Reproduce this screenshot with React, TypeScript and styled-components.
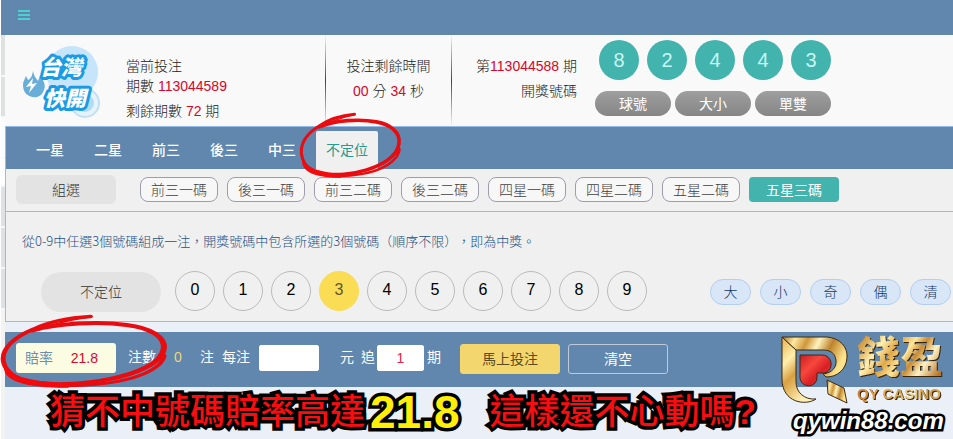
import React, { useState } from "react";
import styled, { createGlobalStyle, css } from "styled-components";

const GlobalStyle = createGlobalStyle`
  *, *::before, *::after { box-sizing: border-box; }
  body {
    margin: 0;
    background: #ebeff8;
    font-family: "Liberation Sans", "Noto Sans CJK TC", sans-serif;
    font-size: 14px;
    font-weight: 300;
    line-height: 20px;
    color: #222;
    text-spacing-trim: space-all;
  }
  button, input { font: inherit; margin: 0; }
  button { cursor: pointer; }
`;

const steel = "#6187ae";
const teal = "#43b3ae";

const Page = styled.div`
  position: relative;
  overflow: hidden;
  padding-left: 1px;
  background: linear-gradient(to right, #fff 1px, #ebeff8 1px);
`;

const TopBar = styled.header`
  height: 35px;
  padding: 0 17px 5px;
  display: flex;
  align-items: center;
  background: ${steel};
`;

const MenuButton = styled.button`
  width: 12px;
  height: 12px;
  padding: 0;
  border: 0;
  background: none;
  display: flex;
  svg { display: block; }
`;

const Columns = styled.div`
  display: grid;
  grid-template-columns: 4px minmax(0, 1fr);
`;

const Rail = styled.div`
  display: flex;
  flex-direction: column;
  background: #f3f3f3;
`;

const RailItem = styled.div<{ $h: number; $bg: string }>`
  height: ${(p) => p.$h}px;
  background: ${(p) => p.$bg};
  border-bottom: 2px solid #f6f7f9;
`;

const Main = styled.main`
  min-width: 0;
`;

const Summary = styled.section`
  height: 91px;
  display: flex;
  background: #f9f9f9;
`;

const Brand = styled.div`
  width: 121px;
  padding: 9px 0 0 16px;
  flex: none;
  svg { display: block; }
  text {
    font: italic 900 21px "Noto Sans CJK TC", sans-serif;
    paint-order: stroke;
    stroke-linejoin: round;
  }
`;

const Red = styled.span`
  color: #d8062c;
`;

const Round = styled.div`
  flex: none;
  width: 199px;
  padding-top: 21px;
  p { margin: 0; }
  p + p + p { margin-top: 5px; }
`;

const Countdown = styled.div`
  flex: none;
  width: 127px;
  padding-top: 21px;
  text-align: center;
  border: solid transparent;
  border-width: 0 1px;
  border-image: linear-gradient(to bottom, #f9f9f9 0%, #444 50%, #f9f9f9 100%) 1;
  p { margin: 0; }
  p + p { margin-top: 5px; }
`;

const Last = styled.div`
  flex: none;
  width: 125px;
  padding-top: 21px;
  text-align: right;
  p { margin: 0; }
  p + p { margin-top: 5px; }
`;

const Draw = styled.div`
  flex: none;
  padding: 5px 0 0 18px;
`;

const Balls = styled.div`
  display: flex;
  gap: 8px;
  padding-left: 4px;
`;

const Ball = styled.span`
  width: 40px;
  height: 40px;
  border-radius: 50%;
  background: ${teal};
  color: #c5f7f4;
  font-size: 20px;
  line-height: 40px;
  text-align: center;
`;

const Views = styled.div`
  display: flex;
  gap: 4px;
  margin-top: 11px;
`;

const ViewButton = styled.button`
  width: 76px;
  height: 25px;
  padding: 0;
  border: 0;
  border-radius: 13px;
  color: #fff;
  font-weight: 400;
  background: linear-gradient(#9e9e9e, #868686);
`;

const Panel = styled.section`
  border: 1px solid #94bbea;
  border-right: 0;
  background: #f0f0f0;
`;

const Tabs = styled.nav`
  height: 42px;
  display: flex;
  align-items: flex-end;
  gap: 10px;
  padding-left: 20px;
  background: ${steel};
`;

const Tab = styled.button<{ $on: boolean }>`
  height: 38px;
  padding: 0 10px;
  border: 0;
  border-radius: 2px 2px 0 0;
  background: ${(p) => (p.$on ? "#f0f0f0" : "transparent")};
  color: ${(p) => (p.$on ? "#259a8f" : "#fff")};
  font-weight: ${(p) => (p.$on ? 400 : 500)};
`;

const Plays = styled.div`
  height: 43px;
  display: flex;
  align-items: flex-start;
  gap: 9px;
  padding: 8px 0 0 10px;
  border-bottom: 1px solid #b4b5b9;
`;

const GroupLabel = styled.span`
  width: 100px;
  height: 29px;
  margin: -2px 15px 0 0;
  border-radius: 6px;
  background: #e3e3e3;
  color: #333;
  line-height: 30px;
  text-align: center;
`;

const PlayButton = styled.button<{ $on: boolean }>`
  width: 78px;
  height: 25px;
  padding: 0;
  border: 1px solid #9c9fab;
  border-radius: 8px;
  background: #f7f7f7;
  color: #404040;
  ${(p) =>
    p.$on &&
    css`
      width: 90px;
      border: 0;
      border-radius: 4px;
      background: ${teal};
      color: #fff;
      font-weight: 400;
    `}
`;

const Hint = styled.p`
  margin: 0;
  padding: 19px 16px 19px;
  font-family: "Noto Sans CJK TC", sans-serif;
  font-size: 13px;
  line-height: 20px;
  color: #1f4f82;
`;

const Picker = styled.div`
  height: 51px;
  display: flex;
  align-items: flex-start;
  padding: 1px 2px 0 35px;
`;

const PickLabel = styled.span`
  flex: none;
  width: 120px;
  height: 40px;
  margin: 1px 14px 0 0;
  border-radius: 20px;
  background: #e3e3e3;
  color: #333;
  line-height: 40px;
  text-align: center;
`;

const Digits = styled.div`
  display: flex;
  gap: 8px;
`;

const Digit = styled.button<{ $on: boolean }>`
  width: 40px;
  height: 40px;
  padding: 0 0 2px;
  border: 1px solid ${(p) => (p.$on ? "#fadc55" : "#bbb")};
  border-radius: 50%;
  background: ${(p) => (p.$on ? "#fadc55" : "transparent")};
  color: ${(p) => (p.$on ? "#5f5830" : "#000")};
  font-size: 16px;
`;

const Quick = styled.div`
  display: flex;
  gap: 9px;
  margin: 8px 0 0 auto;
`;

const QuickButton = styled.button`
  width: 41px;
  height: 26px;
  padding: 0;
  border: 1px solid #b2cff0;
  border-radius: 13px;
  background: #d9e6f8;
  color: #123663;
`;

const BetBar = styled.form`
  height: 55px;
  margin-top: 10px;
  padding: 11px 0 0 11px;
  display: flex;
  align-items: flex-start;
  background: ${steel};
  color: #fff;
  font-weight: 400;
  line-height: 28px;
`;

const Odds = styled.div`
  flex: none;
  width: 100px;
  height: 30px;
  margin-right: 12px;
  padding: 0 18px 0 9px;
  display: flex;
  justify-content: space-between;
  border-radius: 3px;
  background: #fcfce2;
  color: #6c8fb0;
  line-height: 30px;
`;

const Count = styled.output`
  width: 44px;
  text-align: center;
  color: #ecd672;
`;

const Amount = styled.label`
  display: flex;
  margin: 0 21px 0 8px;
  gap: 9px;
`;

const Chase = styled.label`
  display: flex;
  margin: 0 3px 0 7px;
  gap: 2px;
`;

const Field = styled.input<{ $w: number }>`
  width: ${(p) => p.$w}px;
  height: 26px;
  margin-top: 2px;
  padding: 0;
  border: 1px solid #fff;
  border-radius: 2px;
  background: #fff;
  color: #e2244c;
  text-align: center;
`;

const Action = styled.button<{ $solid?: boolean }>`
  width: 100px;
  height: 30px;
  margin: 1px 0 0 8px;
  padding: 0;
  border: 1px solid ${(p) => (p.$solid ? "#f4d66f" : "#bccad9")};
  border-radius: 3px;
  background: ${(p) => (p.$solid ? "#f4d66f" : "transparent")};
  color: ${(p) => (p.$solid ? "#5a4a1c" : "#fff")};
`;

const Actions = styled.div`
  display: flex;
  margin-left: 11px;
`;

const Slogan = styled.p`
  margin: 0;
  height: 52px;
  padding-left: 45px;
  display: flex;
  align-items: flex-start;
  white-space: pre;
  font: 500 35px/50px "Liberation Sans", "Noto Sans CJK TC", sans-serif;
  color: #f80d10;
  -webkit-text-stroke: 7px #000;
  paint-order: stroke fill;
`;

const Figure = styled.strong`
  margin: 0 30px 0 5px;
  font-size: 46px;
  color: #ffee0a;
`;

const Question = styled.b`
  font-weight: 700;
`;

const Sponsor = styled.aside`
  position: absolute;
  right: 5px;
  bottom: 3px;
  width: 167px;
`;

const SponsorRow = styled.div`
  display: flex;
  align-items: flex-end;
  gap: 8px;
  svg { flex: none; display: block; }
`;

const Gold = styled.span<{ $size: number; $line: number; $deep?: boolean }>`
  display: block;
  font: 900 ${(p) => p.$size}px/${(p) => p.$line}px "Liberation Sans", "Noto Sans CJK TC", sans-serif;
  white-space: nowrap;
  color: transparent;
  background: ${(p) =>
    p.$deep
      ? "linear-gradient(100deg, #c9782a 0%, #e8a24a 25%, #d8ad55 50%, #fbe08c 62%, #c8913c 80%, #e8b455 100%)"
      : "linear-gradient(125deg, #c98a2e 6%, #fff0b0 26%, #e0a848 40%, #ffe79a 52%, #c98c34 62%, #fff3c4 74%, #b9762a 92%)"};
  background-clip: text;
  -webkit-background-clip: text;
  filter: drop-shadow(1px 1px 0 #35240c);
`;

const Site = styled.a`
  display: block;
  padding-left: 12px;
  font: italic bold 24px/30px "Liberation Sans", sans-serif;
  text-decoration: none;
  color: #fff;
  -webkit-text-stroke: 5px #000;
  paint-order: stroke fill;
`;

const Ring = styled.svg<{ $x: number; $y: number; $w: number; $h: number }>`
  position: absolute;
  left: ${(p) => p.$x}px;
  top: ${(p) => p.$y}px;
  width: ${(p) => p.$w}px;
  height: ${(p) => p.$h}px;
  overflow: visible;
  pointer-events: none;
`;

type RingProps = { x: number; y: number; w: number; h: number };

function RedRing({ x, y, w, h }: RingProps) {
  return (
    <Ring $x={x} $y={y} $w={w} $h={h} viewBox="120 8 304 198" preserveAspectRatio="none" aria-hidden="true">
      <g fill="none" stroke="#e80c10" strokeLinecap="round" strokeLinejoin="round">
        <path d="M284 12C240 16 206 28 180 46C144 68 122 98 124 130C126 152 138 172 160 184" strokeWidth="9" />
        <path d="M284 13C256 20 222 28 190 48" strokeWidth="4" />
        <path d="M178 50C224 30 300 25 350 35C394 43 422 68 418 100C414 140 366 168 318 182C280 194 226 200 186 192" strokeWidth="11" />
        <path d="M130 156C150 188 196 204 240 200C310 198 376 186 410 142C416 132 420 124 419 118" strokeWidth="8" />
        <path d="M412 118C396 150 362 166 330 176" strokeWidth="5" />
      </g>
      <path d="M128 146C136 172 170 188 244 193L244 205C190 207 128 196 126 156Z" fill="#f40a0c" />
    </Ring>
  );
}

function RoundLogo() {
  return (
    <svg width="84" height="76" viewBox="0 0 84 76" role="img" aria-label="台灣快開">
      <circle cx="51" cy="28" r="26" fill="#c6e4fa" />
      <circle cx="64" cy="59" r="14" fill="#e6f3fb" stroke="#c2e0f2" strokeWidth="2" />
      <circle cx="64" cy="59" r="9" fill="#b4dbf6" />
      <path d="M12 27c1 6 4 8 5 10l2-5c4 5 6 9 4 14-2 6-7 8-11 7-7-1-10-6-10-12 0-4 2-6 3-9l2 4c4-2 4-5 5-9z" fill="#69add9" />
      <path d="M12 34l-7 9 5-1-2 7 8-10-5 1z" fill="#fff" />
      <g fill="#fff" stroke="#199be6" strokeWidth="6">
        <text x="19" y="31">台灣</text>
        <text x="23" y="62">快開</text>
      </g>
    </svg>
  );
}

function SponsorMark() {
  return (
    <svg width="68" height="70" viewBox="0 0 68 70" aria-hidden="true">
      <defs>
        <linearGradient id="goldTop" x1="0" y1="0" x2="1" y2="0.3">
          <stop offset="0" stopColor="#a9782a" />
          <stop offset="0.2" stopColor="#ffe9a0" />
          <stop offset="0.38" stopColor="#d0973a" />
          <stop offset="0.55" stopColor="#fff3bd" />
          <stop offset="0.75" stopColor="#bd832c" />
          <stop offset="1" stopColor="#ffe28c" />
        </linearGradient>
        <linearGradient id="goldSide" x1="0" y1="0" x2="0.5" y2="1">
          <stop offset="0" stopColor="#e3b04a" />
          <stop offset="0.35" stopColor="#fff0ae" />
          <stop offset="0.6" stopColor="#d8a040" />
          <stop offset="1" stopColor="#fff0b5" />
        </linearGradient>
        <linearGradient id="heart" x1="0" y1="0" x2="1" y2="1">
          <stop offset="0" stopColor="#c81c20" />
          <stop offset="0.35" stopColor="#f8473c" />
          <stop offset="0.6" stopColor="#d92026" />
          <stop offset="1" stopColor="#f03a34" />
        </linearGradient>
      </defs>
      <g stroke="#3b2b14" strokeWidth="1" strokeLinejoin="round">
        <path d="M1 1L15 14V46C15 56 23 64 35 63C25 70 1 67 1 43Z" fill="url(#goldSide)" />
        <path d="M1 1H46C59 2 67 11 66 22C65 34 56 41 45 41L42 38C51 37 56 31 55 24C54 17 49 14 42 14H15Z" fill="url(#goldTop)" />
        <path d="M46 44L63 52L66 67L47 58Z" fill="url(#goldTop)" />
        <path d="M19 19H41C53 19 53 37 42 37H36V42C35 53 19 52 19 41Z" fill="url(#heart)" />
      </g>
    </svg>
  );
}

const rails: [number, string][] = [
  [42, "#dfe0e0"],
  [41, "#dfe0e0"],
  [41, "#fbfcfd"],
  [28, "#fdfdfd"],
  [41, "#dfe1e3"],
  [41, "#dfe1e3"],
  [41, "#dfe1e3"],
];
const tabs = ["一星", "二星", "前三", "後三", "中三", "不定位"];
const plays = ["前三一碼", "後三一碼", "前三二碼", "後三二碼", "四星一碼", "四星二碼", "五星二碼", "五星三碼"];

export default function App() {
  const [tab, setTab] = useState("不定位");
  const [play, setPlay] = useState("五星三碼");
  const [pick, setPick] = useState(3);
  return (
    <>
      <GlobalStyle />
      <Page lang="zh-Hant">
        <TopBar>
          <MenuButton aria-label="選單">
            <svg width="12" height="12" viewBox="0 0 12 12" fill="#4fd0d0">
              <path d="M0 1h12v2H0zM0 5h12v2H0zM0 9h12v2H0z" />
            </svg>
          </MenuButton>
        </TopBar>
        <Columns>
          <Rail>
            {rails.map(([h, bg], i) => (
              <RailItem key={i} $h={h} $bg={bg} />
            ))}
          </Rail>
          <Main>
            <Summary>
              <Brand>
                <RoundLogo />
              </Brand>
              <Round>
                <p>當前投注</p>
                <p>期數 <Red>113044589</Red></p>
                <p>剩餘期數 <Red>72</Red> 期</p>
              </Round>
              <Countdown>
                <p>投注剩餘時間</p>
                <p><Red>00</Red> 分 <Red>34</Red> 秒</p>
              </Countdown>
              <Last>
                <p>第<Red>113044588</Red> 期</p>
                <p>開獎號碼</p>
              </Last>
              <Draw>
                <Balls>
                  {[8, 2, 4, 4, 3].map((n, i) => (
                    <Ball key={i}>{n}</Ball>
                  ))}
                </Balls>
                <Views>
                  {["球號", "大小", "單雙"].map((v) => (
                    <ViewButton key={v}>{v}</ViewButton>
                  ))}
                </Views>
              </Draw>
            </Summary>
            <Panel>
              <Tabs>
                {tabs.map((t) => (
                  <Tab key={t} $on={t === tab} onClick={() => setTab(t)}>{t}</Tab>
                ))}
              </Tabs>
              <Plays>
                <GroupLabel>組選</GroupLabel>
                {plays.map((p) => (
                  <PlayButton key={p} $on={p === play} onClick={() => setPlay(p)}>{p}</PlayButton>
                ))}
              </Plays>
              <Hint>從0-9中任選3個號碼組成一注，開獎號碼中包含所選的3個號碼（順序不限），即為中獎。</Hint>
              <Picker>
                <PickLabel>不定位</PickLabel>
                <Digits>
                  {[0, 1, 2, 3, 4, 5, 6, 7, 8, 9].map((n) => (
                    <Digit key={n} $on={n === pick} onClick={() => setPick(n)}>{n}</Digit>
                  ))}
                </Digits>
                <Quick>
                  {["大", "小", "奇", "偶", "清"].map((q) => (
                    <QuickButton key={q}>{q}</QuickButton>
                  ))}
                </Quick>
              </Picker>
            </Panel>
            <BetBar onSubmit={(e) => e.preventDefault()}>
              <Odds>
                <span>賠率</span>
                <Red>21.8</Red>
              </Odds>
              <span>注數</span>
              <Count>0</Count>
              <span>注</span>
              <Amount>
                每注
                <Field $w={60} type="text" />
              </Amount>
              <span>元</span>
              <Chase>
                追
                <Field $w={47} type="text" defaultValue="1" />
              </Chase>
              <span>期</span>
              <Actions>
                <Action $solid type="submit">馬上投注</Action>
                <Action type="reset">清空</Action>
              </Actions>
            </BetBar>
            <Slogan>
              猜不中號碼賠率高達
              <Figure>21.8</Figure>
              這樣還不心動嗎<Question>?</Question>
            </Slogan>
          </Main>
        </Columns>
        <RedRing x={300} y={113} w={101} h={65} />
        <RedRing x={1} y={315} w={166} h={73} />
        <Sponsor>
          <SponsorRow>
            <SponsorMark />
            <div>
              <Gold $size={43} $line={48}>錢盈</Gold>
              <Gold $size={15} $line={24} $deep>QY CASINO</Gold>
            </div>
          </SponsorRow>
          <Site href="#">qywin88.com</Site>
        </Sponsor>
      </Page>
    </>
  );
}
